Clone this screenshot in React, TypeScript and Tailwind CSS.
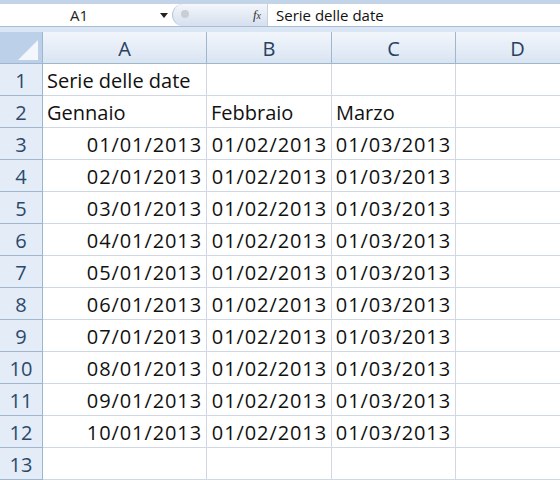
const cols = ['A', 'B', 'C', 'D'];
const widths = ['w-[164px]', 'w-[125px]', 'w-[124px]', 'w-[124px]'];

type Cell = { text: string; right?: boolean };

const rows: Cell[][] = [
  [{ text: 'Serie delle date' }, { text: '' }, { text: '' }, { text: '' }],
  [{ text: 'Gennaio' }, { text: 'Febbraio' }, { text: 'Marzo' }, { text: '' }],
  ...Array.from({ length: 10 }, (_, i) => [
    { text: `${String(i + 1).padStart(2, '0')}/01/2013`, right: true },
    { text: '01/02/2013', right: true },
    { text: '01/03/2013', right: true },
    { text: '' },
  ]),
  [{ text: '' }, { text: '' }, { text: '' }, { text: '' }],
];

function FormulaBar() {
  return (
    <div className="h-[32px] flex flex-col bg-[#cfdcee]">
      <div className="h-[4px] bg-[#c3d3e8]" />
      <div className="flex h-[23px] bg-white border-b border-[#a9bcd4]">
        <div className="w-[172px] flex items-center relative">
          <span className="ml-[70px] text-[15px] text-[#222]">A1</span>
          <span className="absolute left-[160px] top-[9px] w-0 h-0 border-l-[4px] border-r-[4px] border-t-[5px] border-l-transparent border-r-transparent border-t-[#222]" />
        </div>
        <div className="w-[95px] h-full flex items-center rounded-l-full bg-gradient-to-b from-[#f4f7fb] to-[#d5dfee] border-l border-[#b8c5d6] relative">
          <span className="absolute left-[8px] top-[6px] w-[8px] h-[8px] rounded-full bg-[#c9ced6]" />
          <span className="ml-auto mr-[6px] text-[13px] italic text-[#333]" style={{ fontFamily: '"Liberation Serif", serif' }}>
            f<span className="text-[10px]">x</span>
          </span>
        </div>
        <div className="w-px bg-[#c7d2e0]" />
        <div className="flex items-center pl-[8px] text-[15px] text-[#111]">Serie delle date</div>
      </div>
      <div className="flex-1 bg-[#dbe6f4]" />
    </div>
  );
}

export default function App() {
  return (
    <div
      className="w-[560px] h-[480px] overflow-hidden bg-white"
      style={{ fontFamily: '"Open Sans", "Noto Sans", sans-serif' }}
    >
      <FormulaBar />
      <div className="flex h-[32px] border-b border-[#9eb6ce]">
        <div className="w-[43px] shrink-0 relative bg-[#bcd0ea] border-r border-[#9eb6ce] overflow-hidden">
          <svg width="43" height="32" className="absolute inset-0">
            <polygon points="38,8 38,28 18,28" fill="#f3f7fc" />
          </svg>
        </div>
        {cols.map((c, i) => (
          <div
            key={c}
            className={`${widths[i]} shrink-0 flex items-center justify-center pt-[2px] text-[20px] text-[#27415f] bg-gradient-to-b from-[#f2f6fb] to-[#d9e4f2] border-r border-[#9eb6ce]`}
          >
            {c}
          </div>
        ))}
      </div>
      {rows.map((row, r) => (
        <div key={r} className="flex h-[32px]">
          <div className="w-[43px] shrink-0 flex items-center justify-center pt-[3px] text-[20px] text-[#2b4a6b] bg-[#e4ecf7] border-r border-b border-[#9eb6ce]">
            {r + 1}
          </div>
          {row.map((cell, i) => (
            <div
              key={i}
              className={`${widths[i]} shrink-0 flex items-center pt-[3px] px-[4px] text-[20px] text-[#111] border-r border-b border-[#d0d7e5] whitespace-nowrap ${cell.right ? 'justify-end tracking-[0.9px]' : 'justify-start'}`}
            >
              {cell.text}
            </div>
          ))}
        </div>
      ))}
    </div>
  );
}
